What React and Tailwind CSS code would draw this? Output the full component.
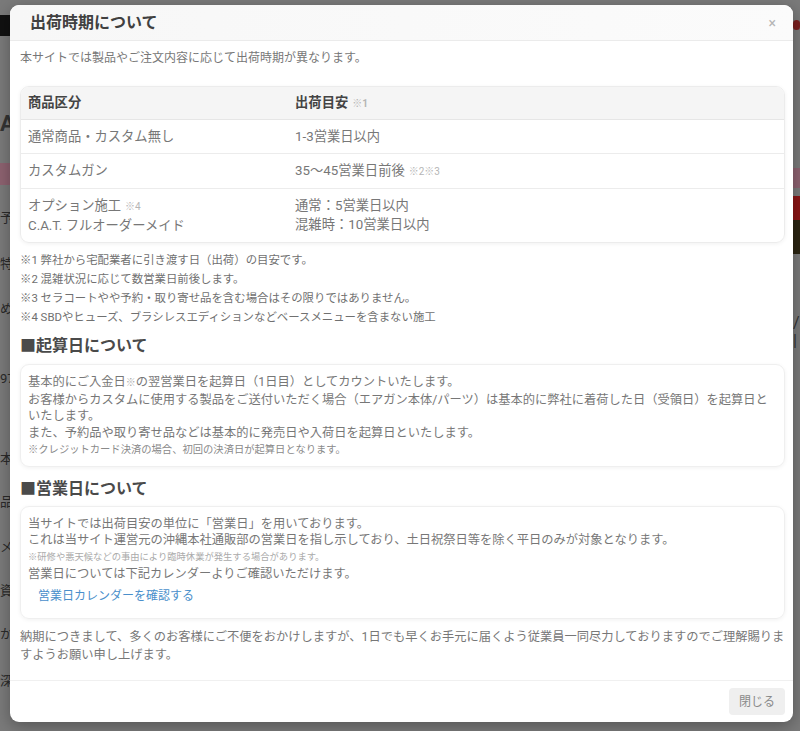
import React from "react";

const FONT = { fontFamily: 'Roboto, "Noto Sans CJK JP", "Noto Sans", sans-serif' };

function Mark({ children }) {
  return <span className="ml-1 text-[10px] text-[#b5b5b5]">{children}</span>;
}

function Row({ left, right, last }) {
  return (
    <div className={`grid grid-cols-[35%_65%] ${last ? "" : "border-b border-[#ececec]"}`}>
      <div className="px-[7px] py-[7px] leading-[19px]">{left}</div>
      <div className="px-[7px] py-[7px] leading-[19px]">{right}</div>
    </div>
  );
}

function BackgroundPage() {
  return (
    <div className="flex h-full w-full justify-between bg-[#7a7a7a] text-[13px] text-[#2a2a2a]">
      <div className="flex w-[10px] flex-col overflow-hidden">
        <div className="mt-[15px] h-[21px] w-[10px] bg-[#111]" />
        <div className="mt-[78px] text-[22px] font-bold leading-[20px] text-[#333]">A</div>
        <div className="mt-[29px] h-[22px] w-[10px] bg-[#8d6270]" />
        <div className="mt-[26px] leading-[14px]">予</div>
        <div className="mt-[32px] leading-[14px]">特</div>
        <div className="mt-[31px] leading-[14px]">め</div>
        <div className="mt-[56px] leading-[14px]">97</div>
        <div className="mt-[66px] leading-[14px]">本</div>
        <div className="mt-[29px] leading-[14px]">品</div>
        <div className="mt-[31px] leading-[14px]">メ</div>
        <div className="mt-[30px] leading-[14px]">資</div>
        <div className="mt-[29px] leading-[14px]">か</div>
        <div className="mt-[33px] leading-[14px]">深</div>
      </div>
      <div className="flex w-[7px] flex-col overflow-hidden">
        <div className="mt-[20px] h-[10px] w-[7px] rounded-full bg-[#7a2020]" />
        <div className="mt-[138px] h-[20px] w-[7px] bg-[#8d6270]" />
        <div className="mt-[8px] h-[24px] w-[7px] bg-[#8a1515]" />
        <div className="h-[34px] w-[7px] bg-[#2a2412]" />
        <div className="mt-[60px] text-[16px] leading-[18px] text-[#333]">/</div>
        <div className="text-[16px] leading-[18px] text-[#333]">|</div>
      </div>
    </div>
  );
}

export default function App() {
  return (
    <div className="relative h-[731px] w-[800px] overflow-hidden" style={FONT}>
      <BackgroundPage />
      <div className="absolute left-[10px] top-[5px] flex h-[717px] w-[783px] flex-col overflow-hidden rounded-[9px] bg-white shadow-[0_4px_16px_rgba(0,0,0,0.3)]">
        {/* header */}
        <div className="flex h-[36px] shrink-0 items-center justify-between border-b border-[#ebebeb] bg-gradient-to-r from-[#f7f7f7] to-[#fbfbfb] pl-[20px] pr-[17px]">
          <h2 className="text-[16px] font-bold leading-[20px] text-[#404040]">出荷時期について</h2>
          <span className="text-[14px] leading-none text-[#b5b5b5]">×</span>
        </div>

        {/* body */}
        <div className="flex-1 pl-[10px] pr-[8px] pt-[8px] text-[12.25px] text-[#777]">
          <p className="text-[12px] leading-[18px]">本サイトでは製品やご注文内容に応じて出荷時期が異なります。</p>

          <div className="mt-[19px] overflow-hidden rounded-[9px] border border-[#ececec] text-[13.3px] shadow-[0_1px_4px_rgba(0,0,0,0.06)]">
            <div className="grid h-[33px] grid-cols-[35%_65%] items-center border-b border-[#e6e6e6] bg-[#f5f5f5] font-bold text-[#444]">
              <div className="px-[7px]">商品区分</div>
              <div className="px-[7px]">
                出荷目安<Mark>※1</Mark>
              </div>
            </div>
            <Row left="通常商品・カスタム無し" right="1-3営業日以内" />
            <Row
              left="カスタムガン"
              right={
                <>
                  35〜45営業日前後<Mark>※2※3</Mark>
                </>
              }
            />
            <Row
              last
              left={
                <>
                  <div>
                    オプション施工<Mark>※4</Mark>
                  </div>
                  <div>C.A.T. フルオーダーメイド</div>
                </>
              }
              right={
                <>
                  <div>通常：5営業日以内</div>
                  <div>混雑時：10営業日以内</div>
                </>
              }
            />
          </div>

          <div className="mt-[8px] text-[11.4px] leading-[19px] text-[#707070]">
            <p>※1 弊社から宅配業者に引き渡す日（出荷）の目安です。</p>
            <p>※2 混雑状況に応じて数営業日前後します。</p>
            <p>※3 セラコートやや予約・取り寄せ品を含む場合はその限りではありません。</p>
            <p>※4 SBDやヒューズ、ブラシレスエディションなどベースメニューを含まない施工</p>
          </div>

          <h3 className="mt-[7px] text-[16px] font-bold leading-[24px] text-[#4a4a4a]">■起算日について</h3>
          <div className="mt-[6px] rounded-[9px] border border-[#efefef] px-[7px] pb-[8px] pt-[9px] leading-[16.7px] shadow-[0_1px_4px_rgba(0,0,0,0.06)]">
            <p>
              基本的にご入金日<span className="text-[10px] text-[#aaa]">※</span>の翌営業日を起算日（1日目）としてカウントいたします。
            </p>
            <p>お客様からカスタムに使用する製品をご送付いただく場合（エアガン本体/パーツ）は基本的に弊社に着荷した日（受領日）を起算日といたします。</p>
            <p>また、予約品や取り寄せ品などは基本的に発売日や入荷日を起算日といたします。</p>
            <p className="text-[10.3px] leading-[16px] text-[#8a8a8a]">※クレジットカード決済の場合、初回の決済日が起算日となります。</p>
          </div>

          <h3 className="mt-[10px] text-[16px] font-bold leading-[24px] text-[#4a4a4a]">■営業日について</h3>
          <div className="mt-[5px] rounded-[9px] border border-[#efefef] px-[7px] pb-[7px] pt-[9px] leading-[16.6px] shadow-[0_1px_4px_rgba(0,0,0,0.06)]">
            <p>当サイトでは出荷目安の単位に「営業日」を用いております。</p>
            <p>これは当サイト運営元の沖縄本社通販部の営業日を指し示しており、土日祝祭日等を除く平日のみが対象となります。</p>
            <p className="text-[9.3px] text-[#aaa]">※研修や悪天候などの事由により臨時休業が発生する場合があります。</p>
            <p>営業日については下記カレンダーよりご確認いただけます。</p>
            <a className="inline-block px-[10px] py-[6px] text-[12px] text-[#4a8fcb]">営業日カレンダーを確認する</a>
          </div>

          <p className="mt-[9px] leading-[18px]">
            納期につきまして、多くのお客様にご不便をおかけしますが、1日でも早くお手元に届くよう従業員一同尽力しておりますのでご理解賜りますようお願い申し上げます。
          </p>
        </div>

        {/* footer */}
        <div className="flex h-[42px] shrink-0 items-start justify-end border-t border-[#f0f0f0] pr-[8px] pt-[7px]">
          <button className="h-[27px] w-[56px] rounded-[4px] bg-[#efefef] text-[12px] text-[#8a8a8a]">閉じる</button>
        </div>
      </div>
    </div>
  );
}
